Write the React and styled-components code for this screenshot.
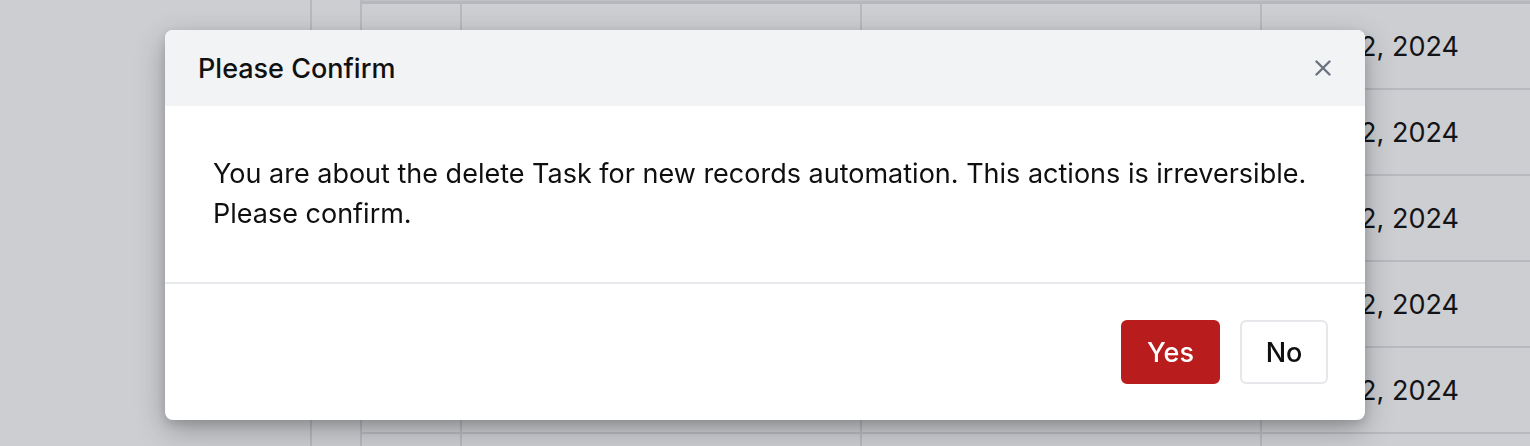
import styled, { createGlobalStyle } from "styled-components";

// only the date column peeks out from behind the dialog
const dates = ["Jan 12, 2024", "Jan 12, 2024", "Jan 12, 2024", "Jan 12, 2024", "Jan 12, 2024", ""];

const App = () => {
  return (
    <>
      <GlobalStyle />
      <Page>
        <Sidebar />
        <Gutter />
        <Table>
          <HeadEdge />
          {dates.map((d, i) => (
            <Row key={i}>
              <Cell />
              <Cell />
              <Cell />
              <Cell>{d}</Cell>
            </Row>
          ))}
        </Table>
      </Page>

      <Overlay>
        <Modal role="dialog">
          <Header>
            <Title>Please Confirm</Title>
            <CloseButton aria-label="Close">
              <svg width="16" height="16" viewBox="0 0 16 16">
                <path
                  d="M1.5 1.5 14.5 14.5M14.5 1.5 1.5 14.5"
                  stroke="currentColor"
                  strokeWidth="2.4"
                  strokeLinecap="round"
                  fill="none"
                />
              </svg>
            </CloseButton>
          </Header>
          <Body>
            You are about the delete Task for new records automation. This
            actions is irreversible.
            <br />
            Please confirm.
          </Body>
          <Footer>
            <Button primary>Yes</Button>
            <Button>No</Button>
          </Footer>
        </Modal>
      </Overlay>
    </>
  );
};

const GlobalStyle = createGlobalStyle`
  * { box-sizing: border-box; }
  body {
    margin: 0;
    background: #ffffff;
    font-family: Inter, "Noto Sans", sans-serif;
    overflow: hidden;
  }
`;

// Background page
const Page = styled.div`
  display: flex;
  height: 100vh;
  overflow: hidden;
  background: #ffffff;
`;

const Sidebar = styled.aside`
  width: 312px;
  flex-shrink: 0;
  border-right: 2px solid #e4e5e9;
`;

const Gutter = styled.div`
  width: 50px;
  flex-shrink: 0;
  border-right: 2px solid #e4e5e9;
`;

const Table = styled.div`
  flex: 1;
  display: flex;
  flex-direction: column;
`;

const HeadEdge = styled.div`
  height: 4px;
  flex-shrink: 0;
  border-top: 1px solid #eef0f2;
  border-bottom: 3px solid #e1e2e6;
`;

const Row = styled.div`
  display: grid;
  grid-template-columns: 100px 400px 400px 1fr;
  height: 86px;
  flex-shrink: 0;
  border-bottom: 2px solid #e4e5e9;
`;

const Cell = styled.div`
  display: flex;
  align-items: center;
  padding: 0 33px;
  font-size: 27px;
  color: #141414;
  white-space: nowrap;
  border-right: 2px solid #e4e5e9;
  &:last-child {
    border-right: none;
  }
`;

// Modal
const Overlay = styled.div`
  position: fixed;
  inset: 0;
  background: rgba(17, 24, 39, 0.21);
  display: flex;
  justify-content: center;
  align-items: flex-start;
  padding-top: 30px;
`;

const Modal = styled.div`
  width: 1200px;
  background: #ffffff;
  border-radius: 8px;
  overflow: hidden;
  box-shadow: 0 10px 30px rgba(0, 0, 0, 0.28), 0 4px 10px rgba(0, 0, 0, 0.12);
`;

const Header = styled.div`
  display: flex;
  align-items: center;
  justify-content: space-between;
  height: 76px;
  padding: 0 34px 0 33px;
  background: #f2f3f5;
`;

const Title = styled.h2`
  margin: 0;
  font-size: 27px;
  font-weight: 500;
  color: #111111;
`;

const CloseButton = styled.button`
  display: flex;
  align-items: center;
  justify-content: center;
  padding: 0;
  border: none;
  background: none;
  color: #6b7280;
  cursor: pointer;
`;

const Body = styled.p`
  margin: 0;
  padding: 48px 48px 48px;
  font-size: 27px;
  line-height: 40px;
  color: #0f0f0f;
  border-bottom: 2px solid #e8e9ec;
`;

const Footer = styled.div`
  display: flex;
  justify-content: flex-end;
  gap: 20px;
  padding: 36px 37px 36px;
`;

const Button = styled.button`
  height: 64px;
  padding: 0 ${(p) => (p.primary ? "24px" : "22px")};
  min-width: ${(p) => (p.primary ? "99px" : "88px")};
  border-radius: 6px;
  border: 2px solid ${(p) => (p.primary ? "#b91c1c" : "#e5e7eb")};
  background: ${(p) => (p.primary ? "#b91c1c" : "#ffffff")};
  color: ${(p) => (p.primary ? "#ffffff" : "#0f0f0f")};
  font-family: inherit;
  font-size: 27px;
  font-weight: 500;
  cursor: pointer;
`;

export default App;
